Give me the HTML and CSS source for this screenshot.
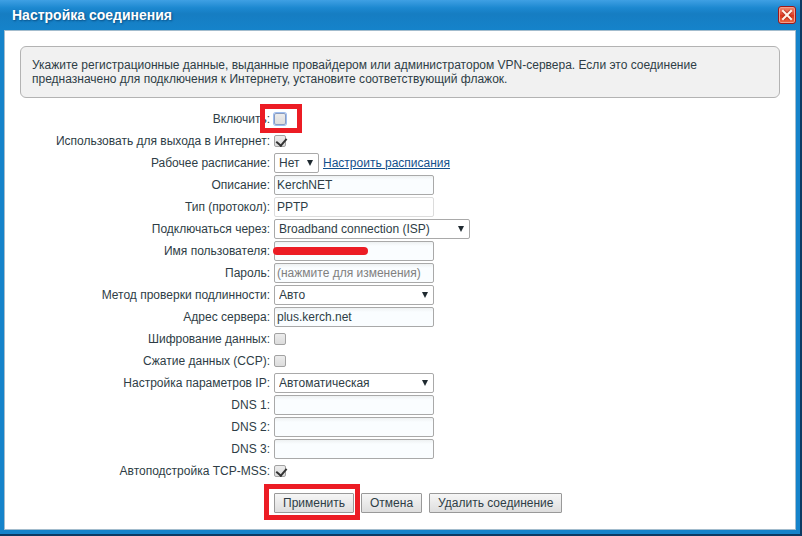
FILE: index.html
```html
<!DOCTYPE html>
<html lang="ru">
<head>
    <meta charset="UTF-8">
    <meta name="viewport" content="width=device-width, initial-scale=1.0">
    <title>Настройка соединения</title>
    <link rel="stylesheet" href="styles.css">
</head>
<body>
    <div class="dialog">
        <div class="dialog-header">
            <h1>Настройка соединения</h1>
            <button type="button" class="close-btn" aria-label="Закрыть">
                <svg width="18" height="18" viewBox="0 0 18 18">
                    <path d="M5 5 L13 13 M13 5 L5 13" stroke="#8e1a10" stroke-width="4" opacity="0.4"/>
                    <path d="M5 5 L13 13 M13 5 L5 13" stroke="#fff6ec" stroke-width="2" stroke-linecap="square"/>
                </svg>
            </button>
        </div>

        <form class="dialog-body">
            <p class="hint">Укажите регистрационные данные, выданные провайдером или администратором VPN-сервера. Если это соединение предназначено для подключения к Интернету, установите соответствующий флажок.</p>

            <div class="row">
                <label for="enable">Включить:</label>
                <span class="mark mark-check"><input type="checkbox" id="enable" class="focused"></span>
            </div>
            <div class="row">
                <label for="internet">Использовать для выхода в Интернет:</label>
                <input type="checkbox" id="internet" checked>
            </div>
            <div class="row">
                <label for="schedule">Рабочее расписание:</label>
                <span class="select select-small">
                    <select id="schedule"><option>Нет</option></select>
                </span>
                <a href="#">Настроить расписания</a>
            </div>
            <div class="row">
                <label for="description">Описание:</label>
                <input type="text" id="description" value="KerchNET">
            </div>
            <div class="row">
                <label for="type">Тип (протокол):</label>
                <input type="text" id="type" value="PPTP" readonly>
            </div>
            <div class="row">
                <label for="via">Подключаться через:</label>
                <span class="select select-wide">
                    <select id="via"><option>Broadband connection (ISP)</option></select>
                </span>
            </div>
            <div class="row">
                <label for="username">Имя пользователя:</label>
                <span class="covered"><input type="text" id="username"></span>
            </div>
            <div class="row">
                <label for="password">Пароль:</label>
                <input type="text" id="password" placeholder="(нажмите для изменения)">
            </div>
            <div class="row">
                <label for="auth">Метод проверки подлинности:</label>
                <span class="select">
                    <select id="auth"><option>Авто</option></select>
                </span>
            </div>
            <div class="row">
                <label for="server">Адрес сервера:</label>
                <input type="text" id="server" value="plus.kerch.net">
            </div>
            <div class="row">
                <label for="encryption">Шифрование данных:</label>
                <input type="checkbox" id="encryption">
            </div>
            <div class="row">
                <label for="ccp">Сжатие данных (CCP):</label>
                <input type="checkbox" id="ccp">
            </div>
            <div class="row">
                <label for="ip">Настройка параметров IP:</label>
                <span class="select">
                    <select id="ip"><option>Автоматическая</option></select>
                </span>
            </div>
            <div class="row">
                <label for="dns1">DNS 1:</label>
                <input type="text" id="dns1">
            </div>
            <div class="row">
                <label for="dns2">DNS 2:</label>
                <input type="text" id="dns2">
            </div>
            <div class="row">
                <label for="dns3">DNS 3:</label>
                <input type="text" id="dns3">
            </div>
            <div class="row">
                <label for="mss">Автоподстройка TCP-MSS:</label>
                <input type="checkbox" id="mss" checked>
            </div>

            <div class="buttons">
                <span class="mark mark-apply"><button type="button" class="btn">Применить</button></span>
                <button type="button" class="btn">Отмена</button>
                <button type="button" class="btn">Удалить соединение</button>
            </div>
        </form>
    </div>
</body>
</html>
```

FILE: styles.css
```css
* {
    box-sizing: border-box;
}

body {
    margin: 0;
    min-height: 100vh;
    display: flex;
    padding: 0 2px 2px 0;
    background: #0b3a63;
    font-family: "Liberation Sans", Arial, sans-serif;
    font-size: 12px;
    line-height: 14px;
    color: #2e3d46;
}

.dialog {
    flex: 1;
    display: flex;
    flex-direction: column;
    padding: 0 4px 4px;
    background: #1583ca;
}

.dialog-header {
    display: flex;
    align-items: center;
    justify-content: space-between;
    height: 30px;
    margin: 0 -4px;
    padding: 0 4px 0 12px;
    background: linear-gradient(#3fa0e4 0, #1c88d0 8px, #167dc2 14px, #1583ca 30px);
}

h1 {
    margin: 0;
    font-size: 14px;
    line-height: 20px;
    color: #fff;
    text-shadow: 1px 1px 2px #0a4c80;
}

.close-btn {
    width: 18px;
    height: 18px;
    padding: 0;
    border: 1px solid #a01818;
    border-radius: 3px;
    background: linear-gradient(#f08a70, #e0432c 50%, #d93418 51%, #ee6a44);
    box-shadow: inset 0 0 0 1px #f2a08c;
}

.close-btn svg {
    display: block;
    margin: -1px;
}

.dialog-body {
    flex: 1;
    padding: 15px;
    border: 1px solid #a3bccd;
    background: #fff;
}

.hint {
    margin: 0 0 10px;
    padding: 11px;
    border: 1px solid #b3b3b3;
    border-radius: 6px;
    background: #f1f1f1;
    min-height: 52px;
}

.row {
    display: flex;
    align-items: center;
    gap: 4px;
    height: 22px;
}

.row label {
    flex: 0 0 250px;
    text-align: right;
    white-space: nowrap;
}

input[type="text"],
select {
    width: 160px;
    height: 20px;
    margin: 0;
    border: 1px solid #a9a9a9;
    border-radius: 2px;
    font: inherit;
    color: inherit;
}

input[type="text"] {
    padding: 0 2px;
    background: linear-gradient(#eef1f2, #fafdff 4px);
}

input[type="text"]:read-only {
    border-color: #dcdcdc;
    background: #fff;
}

input::placeholder {
    color: #808080;
    opacity: 1;
}

.select {
    position: relative;
}

.select::after {
    content: "";
    position: absolute;
    top: 7px;
    right: 6px;
    border: 3px solid transparent;
    border-top: 6px solid #1f2a30;
    border-bottom: 0;
    pointer-events: none;
}

select {
    display: block;
    padding: 0 4px;
    appearance: none;
    background: #fff;
}

.select-small select {
    width: 45px;
}

.select-wide select {
    width: 196px;
}

a {
    color: #12508c;
}

input[type="checkbox"] {
    position: relative;
    width: 12px;
    height: 12px;
    margin: 0;
    appearance: none;
    border: 1px solid #a2a2a2;
    border-radius: 2px;
    background: linear-gradient(#ececec, #dcdcdc);
}

input[type="checkbox"]:checked::after {
    content: "";
    position: absolute;
    top: 0;
    left: 3px;
    width: 5px;
    height: 8px;
    border: solid #333;
    border-width: 0 2px 2px 0;
    transform: rotate(40deg);
}

input.focused {
    border-color: #8a9cc0;
    box-shadow: 0 0 0 1px #9dbdf0;
}

/* red frames around the controls to click */
.mark {
    position: relative;
    display: flex;
}

.mark::after {
    content: "";
    position: absolute;
    border: 5px solid #ec1c24;
    pointer-events: none;
}

.mark-check::after {
    inset: -9px -16px -8px -14px;
}

.mark-apply::after {
    inset: -9px -6px -7px -10px;
}

/* stroke that hides the user name */
.covered {
    position: relative;
}

.covered input {
    display: block;
}

.covered::after {
    content: "";
    position: absolute;
    top: 6px;
    left: -1px;
    width: 95px;
    height: 8px;
    border-radius: 4px;
    background: #ec1c24;
}

.buttons {
    display: flex;
    gap: 7px;
    margin: 11px 0 0 254px;
}

.btn {
    height: 20px;
    padding: 0 8px;
    border: 1px solid #999;
    border-radius: 1px;
    background: linear-gradient(#f6f6f6, #dedede);
    font: inherit;
    color: inherit;
    white-space: nowrap;
}
```
